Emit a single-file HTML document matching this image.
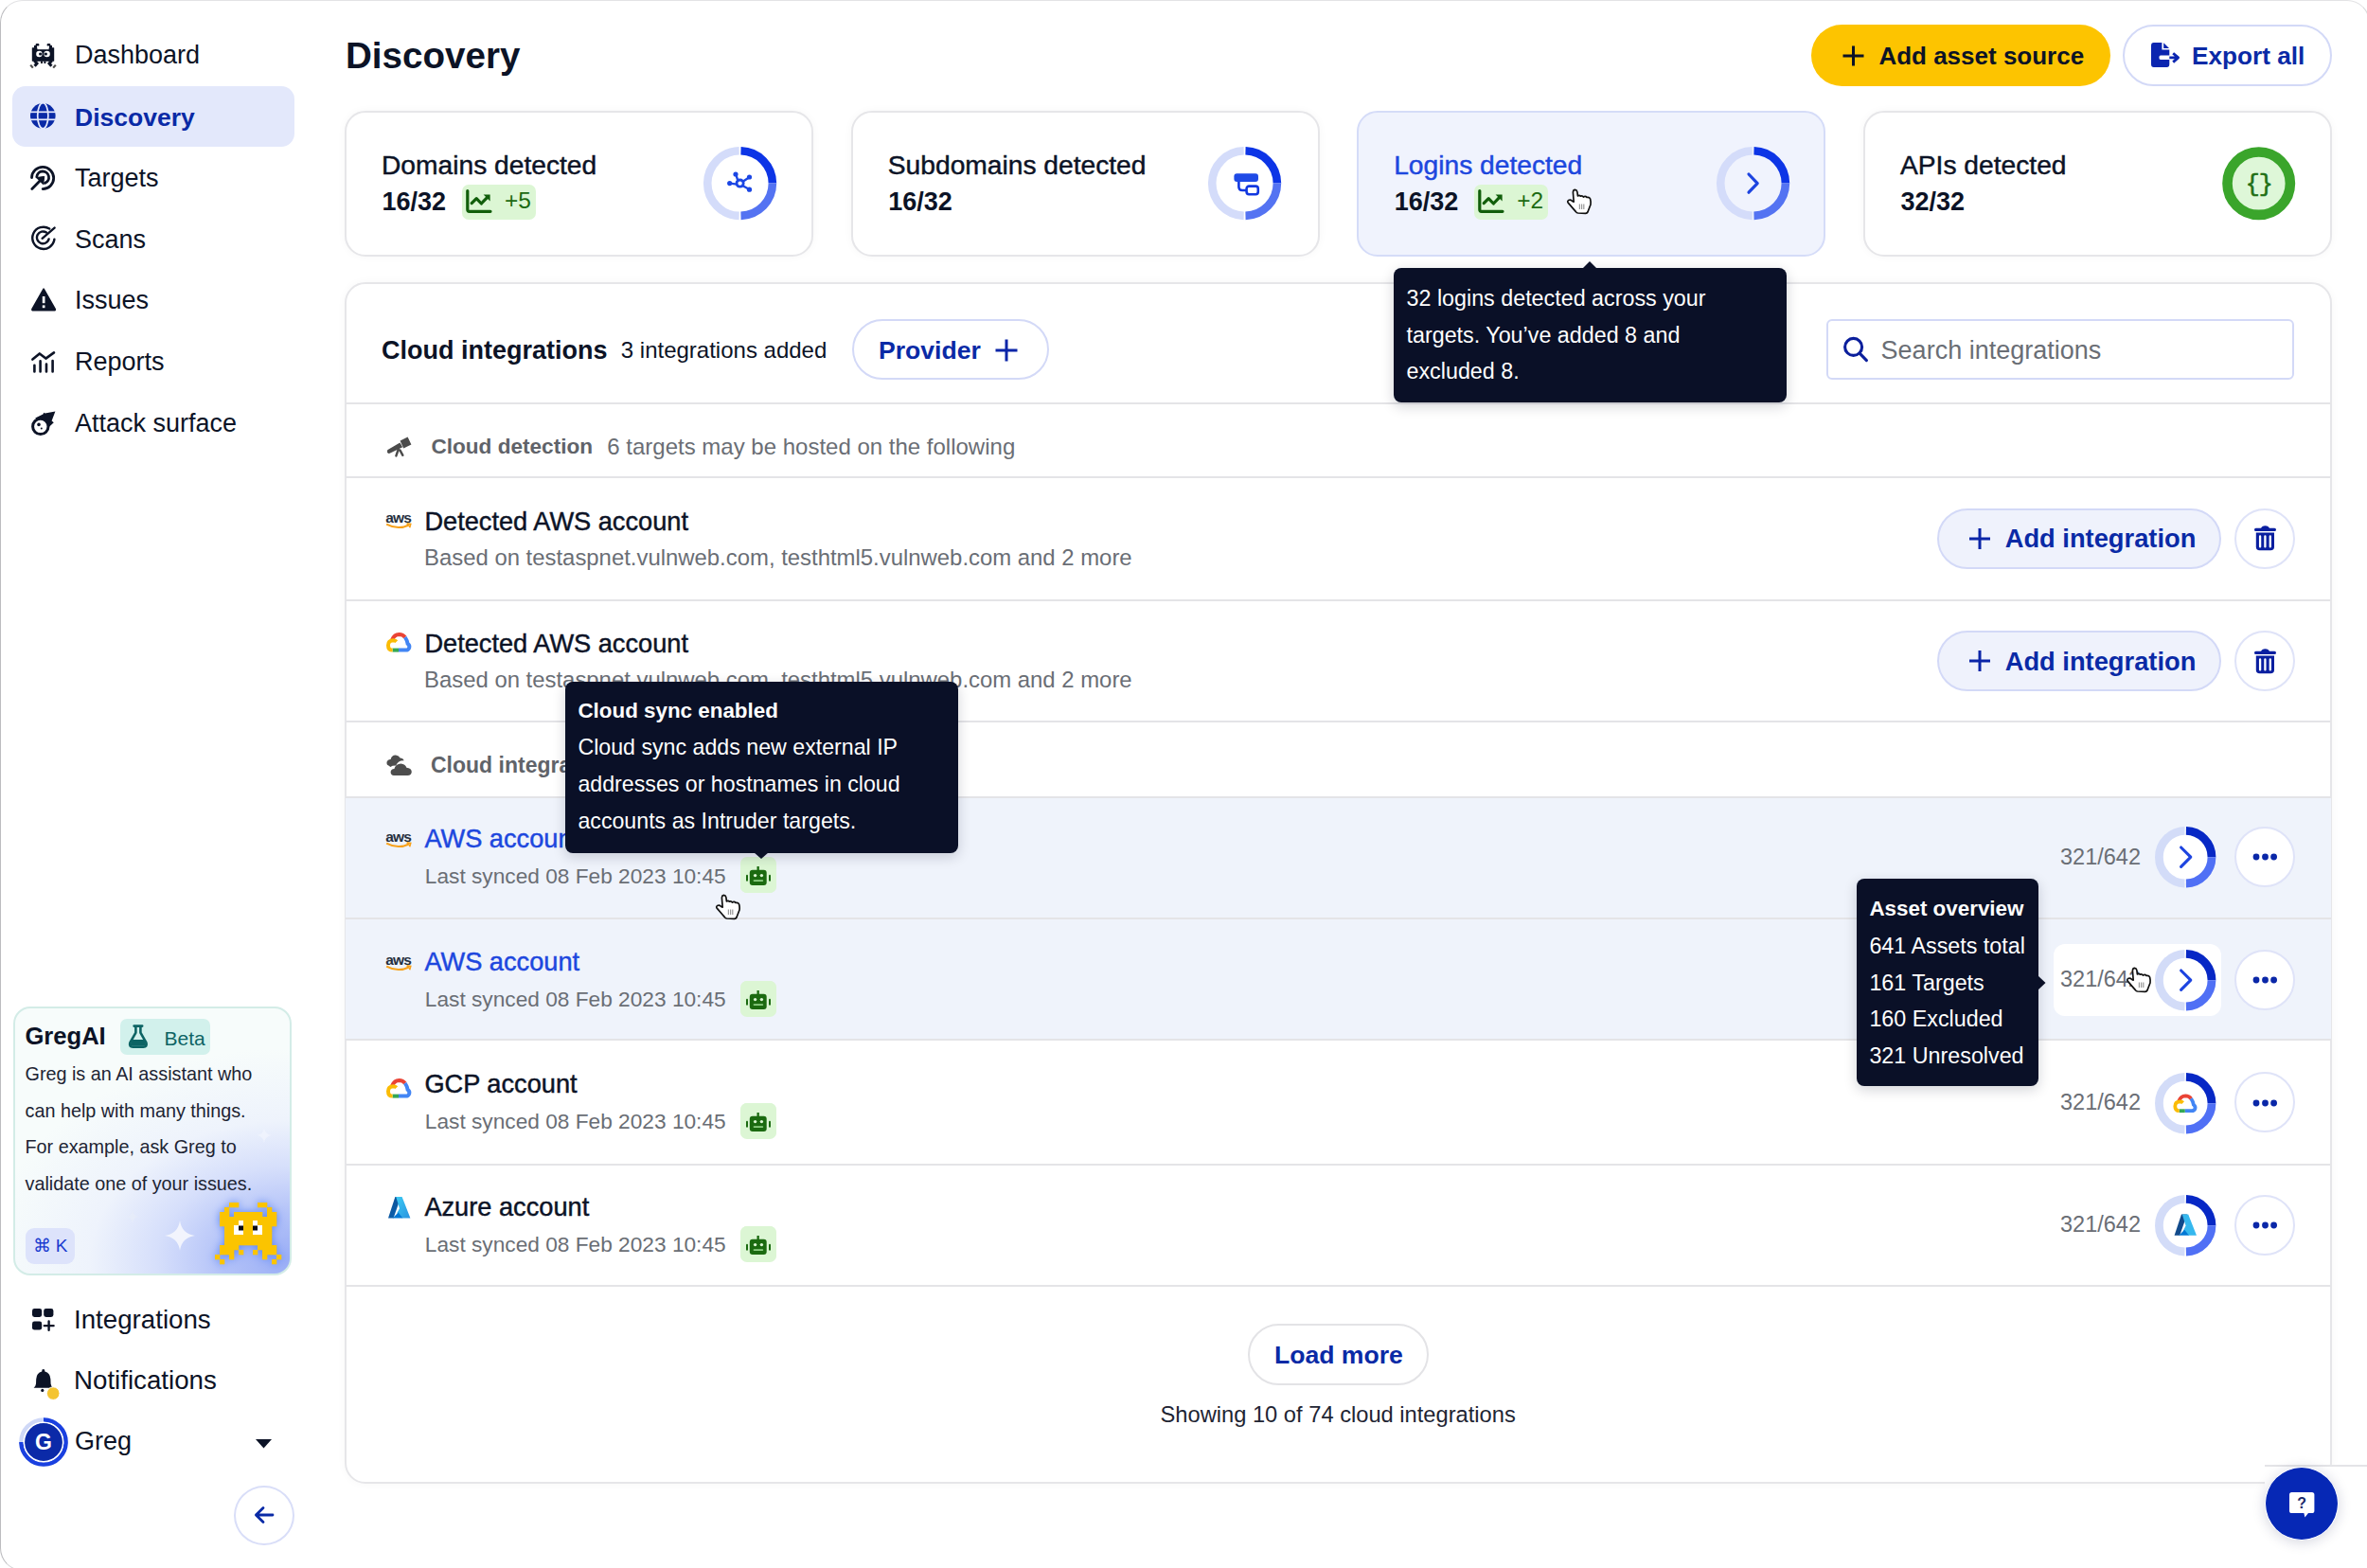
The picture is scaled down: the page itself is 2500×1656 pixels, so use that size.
<!DOCTYPE html>
<html><head><meta charset="utf-8"><title>Discovery</title>
<style>
html,body{margin:0;padding:0;background:#fff;}
body{width:2500px;height:1656px;position:relative;overflow:hidden;font-family:"Liberation Sans",sans-serif;}
.t{position:absolute;white-space:nowrap;line-height:1;}
.b{position:absolute;box-sizing:border-box;}
svg.b{overflow:visible;}
</style></head><body>

<div class="b" style="left:0.0px;top:0.0px;width:2503.0px;height:1659.0px;border:1.5px solid #d8d8da;border-left-color:#bcbcbf;border-top-color:#e3e3e5;border-radius:24px;"></div>
<div class="b" style="left:13.0px;top:91.0px;width:298.0px;height:64.0px;background:#e3e8fb;border-radius:14px;"></div>
<div class="t" style="left:79.0px;top:44.7px;font-size:27px;font-weight:400;color:#0c1326;">Dashboard</div>
<div class="t" style="left:79.0px;top:110.9px;font-size:26.5px;font-weight:700;color:#0a2aa6;">Discovery</div>
<div class="t" style="left:79.0px;top:174.8px;font-size:27px;font-weight:400;color:#0c1326;">Targets</div>
<div class="t" style="left:79.0px;top:239.5px;font-size:27px;font-weight:400;color:#0c1326;">Scans</div>
<div class="t" style="left:79.0px;top:304.1px;font-size:27px;font-weight:400;color:#0c1326;">Issues</div>
<div class="t" style="left:79.0px;top:368.7px;font-size:27px;font-weight:400;color:#0c1326;">Reports</div>
<div class="t" style="left:79.0px;top:433.7px;font-size:27px;font-weight:400;color:#0c1326;">Attack surface</div>
<div class="t" style="left:78.0px;top:1379.6px;font-size:27.7px;font-weight:400;color:#0c1326;">Integrations</div>
<div class="t" style="left:78.0px;top:1444.2px;font-size:27.7px;font-weight:400;color:#0c1326;">Notifications</div>
<div class="t" style="left:79.0px;top:1508.9px;font-size:27px;font-weight:400;color:#0c1326;">Greg</div>
<div class="t" style="left:365.0px;top:40.1px;font-size:38.6px;font-weight:700;color:#0c1326;">Discovery</div>
<div class="b" style="left:1913.0px;top:26.0px;width:316.0px;height:65.0px;background:#fdc400;border-radius:33px;"></div>
<div class="t" style="left:1984.4px;top:45.8px;font-size:26px;font-weight:700;color:#0c1326;">Add asset source</div>
<div class="b" style="left:2242.0px;top:26.0px;width:221.0px;height:65.0px;background:#fff;border:2px solid #d3d9f7;border-radius:33px;"></div>
<div class="t" style="left:2315.0px;top:45.6px;font-size:26.2px;font-weight:700;color:#0a2aa6;">Export all</div>
<div class="b" style="left:364.0px;top:116.5px;width:495.0px;height:154.5px;background:#fff;border:2px solid #e6e6e9;border-radius:22px;box-shadow:0 0 10px rgba(0,0,0,0.035);"></div>
<div class="t" style="left:403.0px;top:160.4px;font-size:28.2px;font-weight:400;color:#0c1326;-webkit-text-stroke:0.45px #0c1326;">Domains detected</div>
<div class="t" style="left:403.5px;top:200.1px;font-size:27px;font-weight:700;color:#0c1326;">16/32</div>
<div class="b" style="left:487.5px;top:195.0px;width:78.0px;height:37.0px;background:#dcf6d4;border-radius:7px;"></div>
<div class="t" style="left:533.0px;top:199.9px;font-size:24.5px;font-weight:400;color:#1c6a12;">+5</div>
<div class="b" style="left:898.8px;top:116.5px;width:495.0px;height:154.5px;background:#fff;border:2px solid #e6e6e9;border-radius:22px;box-shadow:0 0 10px rgba(0,0,0,0.035);"></div>
<div class="t" style="left:937.8px;top:160.4px;font-size:28.2px;font-weight:400;color:#0c1326;-webkit-text-stroke:0.45px #0c1326;">Subdomains detected</div>
<div class="t" style="left:938.3px;top:200.1px;font-size:27px;font-weight:700;color:#0c1326;">16/32</div>
<div class="b" style="left:1433.2px;top:116.5px;width:495.0px;height:154.5px;background:#f0f3fd;border:2px solid #d5dcf8;border-radius:22px;"></div>
<div class="t" style="left:1472.2px;top:160.4px;font-size:28.2px;font-weight:400;color:#1d47de;-webkit-text-stroke:0.45px #1d47de;">Logins detected</div>
<div class="t" style="left:1472.7px;top:200.1px;font-size:27px;font-weight:700;color:#0c1326;">16/32</div>
<div class="b" style="left:1556.7px;top:195.0px;width:78.0px;height:37.0px;background:#dcf6d4;border-radius:7px;"></div>
<div class="t" style="left:1602.2px;top:199.9px;font-size:24.5px;font-weight:400;color:#1c6a12;">+2</div>
<div class="b" style="left:1968.0px;top:116.5px;width:495.0px;height:154.5px;background:#fff;border:2px solid #e6e6e9;border-radius:22px;box-shadow:0 0 10px rgba(0,0,0,0.035);"></div>
<div class="t" style="left:2007.0px;top:160.4px;font-size:28.2px;font-weight:400;color:#0c1326;-webkit-text-stroke:0.45px #0c1326;">APIs detected</div>
<div class="t" style="left:2007.5px;top:200.1px;font-size:27px;font-weight:700;color:#0c1326;">32/32</div>
<div class="b" style="left:364.0px;top:298.0px;width:2099.0px;height:1269.0px;background:#fff;border:2px solid #e6e6e9;border-radius:22px;box-shadow:0 0 10px rgba(0,0,0,0.035);"></div>
<div class="t" style="left:403.0px;top:356.7px;font-size:27px;font-weight:700;color:#0c1326;">Cloud integrations</div>
<div class="t" style="left:655.8px;top:358.2px;font-size:24px;font-weight:400;color:#0c1326;">3 integrations added</div>
<div class="b" style="left:900.0px;top:337.0px;width:208.0px;height:64.0px;background:#fff;border:2px solid #d3d9f7;border-radius:32px;"></div>
<div class="t" style="left:928.0px;top:356.5px;font-size:26.6px;font-weight:700;color:#0a2aa6;">Provider</div>
<div class="b" style="left:1928.5px;top:337.0px;width:494.5px;height:64.0px;background:#fff;border:2px solid #d3d9f7;border-radius:6px;"></div>
<div class="t" style="left:1986.6px;top:357.1px;font-size:27px;font-weight:400;color:#6a6e75;">Search integrations</div>
<div class="b" style="left:365.0px;top:425.0px;width:2097.0px;height:2.0px;background:#e4e4e7;"></div>
<div class="b" style="left:365.0px;top:502.5px;width:2097.0px;height:2.0px;background:#e4e4e7;"></div>
<div class="b" style="left:365.0px;top:632.5px;width:2097.0px;height:2.0px;background:#e4e4e7;"></div>
<div class="b" style="left:365.0px;top:760.5px;width:2097.0px;height:2.0px;background:#e4e4e7;"></div>
<div class="t" style="left:455.4px;top:460.9px;font-size:22.6px;font-weight:700;color:#606369;">Cloud detection</div>
<div class="t" style="left:641.3px;top:459.7px;font-size:24px;font-weight:400;color:#6a6e75;">6 targets may be hosted on the following</div>
<div class="t" style="left:448.4px;top:536.7px;font-size:27.2px;font-weight:400;color:#0c1326;-webkit-text-stroke:0.45px #0c1326;">Detected AWS account</div>
<div class="t" style="left:448.0px;top:576.8px;font-size:23.9px;font-weight:400;color:#6a6e75;">Based on testaspnet.vulnweb.com, testhtml5.vulnweb.com and 2 more</div>
<div class="t" style="left:448.4px;top:666.0px;font-size:27.2px;font-weight:400;color:#0c1326;-webkit-text-stroke:0.45px #0c1326;">Detected AWS account</div>
<div class="t" style="left:448.0px;top:705.8px;font-size:23.9px;font-weight:400;color:#6a6e75;">Based on testaspnet.vulnweb.com, testhtml5.vulnweb.com and 2 more</div>
<div class="b" style="left:2046.0px;top:536.5px;width:300.0px;height:64.0px;background:#eff2fc;border:2px solid #d3d9f7;border-radius:32px;"></div>
<div class="t" style="left:2117.7px;top:555.1px;font-size:27.3px;font-weight:700;color:#0a2aa6;">Add integration</div>
<div class="b" style="left:2360.0px;top:536.5px;width:64.0px;height:64.0px;background:#fff;border:2px solid #dfe3f8;border-radius:50%;"></div>
<div class="b" style="left:2046.0px;top:666.2px;width:300.0px;height:64.0px;background:#eff2fc;border:2px solid #d3d9f7;border-radius:32px;"></div>
<div class="t" style="left:2117.7px;top:684.8px;font-size:27.3px;font-weight:700;color:#0a2aa6;">Add integration</div>
<div class="b" style="left:2360.0px;top:666.2px;width:64.0px;height:64.0px;background:#fff;border:2px solid #dfe3f8;border-radius:50%;"></div>
<div class="t" style="left:455.0px;top:797.2px;font-size:23px;font-weight:700;color:#606369;">Cloud integrations</div>
<div class="b" style="left:365.0px;top:842.0px;width:2097.0px;height:128.0px;background:#eff3fb;"></div>
<div class="b" style="left:365.0px;top:841.0px;width:2097.0px;height:2.0px;background:#e4e4e7;"></div>
<div class="b" style="left:365.0px;top:970.0px;width:2097.0px;height:128.0px;background:#eff3fb;"></div>
<div class="b" style="left:365.0px;top:969.0px;width:2097.0px;height:2.0px;background:#e4e4e7;"></div>
<div class="b" style="left:365.0px;top:1097.0px;width:2097.0px;height:2.0px;background:#e4e4e7;"></div>
<div class="b" style="left:365.0px;top:1229.0px;width:2097.0px;height:2.0px;background:#e4e4e7;"></div>
<div class="b" style="left:2169.0px;top:996.7px;width:177.4px;height:76.8px;background:#fff;border-radius:12px;"></div>
<div class="t" style="left:448.4px;top:872.4px;font-size:27.2px;font-weight:400;color:#1d47de;-webkit-text-stroke:0.45px #1d47de;">AWS account</div>
<div class="t" style="left:448.8px;top:914.1px;font-size:22.7px;font-weight:400;color:#6a6e75;">Last synced 08 Feb 2023 10:45</div>
<div class="b" style="left:782.0px;top:906.4px;width:38.0px;height:37.0px;background:#dcf6d4;border-radius:7px;"></div>
<div class="t" style="left:2176.0px;top:893.5px;font-size:23.5px;font-weight:400;color:#6a6e75;">321/642</div>
<div class="b" style="left:2360.0px;top:873.4px;width:64.0px;height:64.0px;background:#fff;border:2px solid #dfe3f8;border-radius:50%;"></div>
<div class="t" style="left:448.4px;top:1001.9px;font-size:27.2px;font-weight:400;color:#1d47de;-webkit-text-stroke:0.45px #1d47de;">AWS account</div>
<div class="t" style="left:448.8px;top:1043.6px;font-size:22.7px;font-weight:400;color:#6a6e75;">Last synced 08 Feb 2023 10:45</div>
<div class="b" style="left:782.0px;top:1035.9px;width:38.0px;height:37.0px;background:#dcf6d4;border-radius:7px;"></div>
<div class="t" style="left:2176.0px;top:1023.0px;font-size:23.5px;font-weight:400;color:#6a6e75;">321/642</div>
<div class="b" style="left:2360.0px;top:1002.9px;width:64.0px;height:64.0px;background:#fff;border:2px solid #dfe3f8;border-radius:50%;"></div>
<div class="t" style="left:448.4px;top:1131.4px;font-size:27.2px;font-weight:400;color:#0c1326;-webkit-text-stroke:0.45px #0c1326;">GCP account</div>
<div class="t" style="left:448.8px;top:1173.1px;font-size:22.7px;font-weight:400;color:#6a6e75;">Last synced 08 Feb 2023 10:45</div>
<div class="b" style="left:782.0px;top:1165.4px;width:38.0px;height:37.0px;background:#dcf6d4;border-radius:7px;"></div>
<div class="t" style="left:2176.0px;top:1152.5px;font-size:23.5px;font-weight:400;color:#6a6e75;">321/642</div>
<div class="b" style="left:2360.0px;top:1132.4px;width:64.0px;height:64.0px;background:#fff;border:2px solid #dfe3f8;border-radius:50%;"></div>
<div class="t" style="left:448.4px;top:1260.9px;font-size:27.2px;font-weight:400;color:#0c1326;-webkit-text-stroke:0.45px #0c1326;">Azure account</div>
<div class="t" style="left:448.8px;top:1302.6px;font-size:22.7px;font-weight:400;color:#6a6e75;">Last synced 08 Feb 2023 10:45</div>
<div class="b" style="left:782.0px;top:1294.9px;width:38.0px;height:37.0px;background:#dcf6d4;border-radius:7px;"></div>
<div class="t" style="left:2176.0px;top:1282.0px;font-size:23.5px;font-weight:400;color:#6a6e75;">321/642</div>
<div class="b" style="left:2360.0px;top:1261.9px;width:64.0px;height:64.0px;background:#fff;border:2px solid #dfe3f8;border-radius:50%;"></div>
<div class="b" style="left:365.0px;top:1357.0px;width:2097.0px;height:2.0px;background:#e4e4e7;"></div>
<div class="b" style="left:1318.4px;top:1398.3px;width:190.6px;height:64.4px;background:#fff;border:2px solid #e3e3e6;border-radius:33px;"></div>
<div class="t" style="left:1345.9px;top:1417.6px;font-size:26.6px;font-weight:700;color:#0a2aa6;">Load more</div>
<div class="t" style="left:1225.5px;top:1483.2px;font-size:23.7px;font-weight:400;color:#1f2533;">Showing 10 of 74 cloud integrations</div>
<svg class="b" style="left:31.0px;top:45.5px;" width="29" height="27" viewBox="0 0 29 27"><g fill="#0c1326">
<rect x="6.6" y="0" width="3.8" height="2.6" rx="1.2"/><rect x="18.6" y="0" width="3.8" height="2.6" rx="1.2"/>
<rect x="5" y="2" width="3" height="3.6"/><rect x="21" y="2" width="3" height="3.6"/>
<rect x="2.8" y="4.2" width="5.6" height="14.6" rx="0.6"/><rect x="20.6" y="4.2" width="5.6" height="14.6" rx="0.6"/>
<rect x="8" y="6.2" width="13" height="12.6"/>
<rect x="12" y="18.6" width="2" height="2.4"/><rect x="15.4" y="18.6" width="2" height="2.4"/>
</g>
<circle cx="10.4" cy="11" r="3.2" fill="#fff"/><circle cx="18.6" cy="11" r="3.2" fill="#fff"/>
<circle cx="11.6" cy="11" r="1.6" fill="#0c1326"/><circle cx="17.4" cy="11" r="1.6" fill="#0c1326"/>
<path d="M5.2 18 L8 21 L5.6 23.8" stroke="#0c1326" stroke-width="3" fill="none"/>
<path d="M23.8 18 L21 21 L23.4 23.8" stroke="#0c1326" stroke-width="3" fill="none"/>
<path d="M1.2 22.6 L3.8 25.6" stroke="#4a4a4a" stroke-width="2.2"/><path d="M27.8 22.6 L25.2 25.6" stroke="#4a4a4a" stroke-width="2.2"/></svg>
<svg class="b" style="left:32.4px;top:109.2px;" width="26.6" height="26.6" viewBox="0 0 26.6 26.6"><circle cx="13.3" cy="13.3" r="13.3" fill="#0a2aa6"/>
<g stroke="#e3e8fb" stroke-width="1.7" fill="none"><line x1="0" y1="9.3" x2="26.6" y2="9.3"/><line x1="0" y1="17.3" x2="26.6" y2="17.3"/>
<ellipse cx="13.3" cy="13.3" rx="5.6" ry="13.6"/></g></svg>
<svg class="b" style="left:32.4px;top:174.7px;" width="26.4" height="26.4" viewBox="0 0 26.4 26.4"><g fill="none" stroke="#0c1326" stroke-width="2.8" stroke-linecap="round">
<path d="M1.5 12.6 A11.6 11.6 0 1 1 13.2 24.6"/>
<path d="M6.8 11.8 A6.4 6.4 0 1 1 15.4 18.4"/>
<path d="M1.8 24.4 L10.6 15.6"/></g>
<path d="M6.4 12.6 L14.8 11.4 L13.6 19.8z" fill="#0c1326" stroke="#0c1326" stroke-width="1" stroke-linejoin="round"/></svg>
<svg class="b" style="left:33.0px;top:239.2px;" width="26" height="26" viewBox="0 0 26 26"><g fill="none" stroke="#0c1326" stroke-width="2.4" stroke-linecap="round">
<path d="M19.2 2.6 A11.6 11.6 0 1 0 24.4 13.6"/>
<path d="M16 6.6 A6.4 6.4 0 1 0 18.6 13.4"/>
<path d="M11.6 12.8 L24.6 1.6"/></g></svg>
<svg class="b" style="left:32.6px;top:303.8px;" width="26.2" height="24.6" viewBox="0 0 26.2 24.6"><path d="M13.1 1.2 L25.2 22.4 Q25.6 23.8 24.2 23.8 L2 23.8 Q0.6 23.8 1 22.4z" fill="#0c1326" stroke="#0c1326" stroke-width="1.6" stroke-linejoin="round"/>
<rect x="11.8" y="9" width="2.7" height="7.2" fill="#fff"/><rect x="11.8" y="18.4" width="2.7" height="2.8" fill="#fff"/></svg>
<svg class="b" style="left:32.7px;top:370.5px;" width="26.3" height="23" viewBox="0 0 26.3 23"><g fill="none" stroke="#0c1326" stroke-width="2.6" stroke-linecap="round" stroke-linejoin="round">
<path d="M1.4 8.6 L8.8 2.4 L15.4 7.6 L24 1.4"/>
<path d="M3.4 14.8 V21.4 M9.6 10.4 V21.4 M16 13.6 V21.4 M22.6 10 V21.4"/></g></svg>
<svg class="b" style="left:32.7px;top:433.7px;" width="26" height="26" viewBox="0 0 26 26"><path d="M4.2 7.6 L12.4 3.4 L13.4 1.8 L14.6 2.6 L25.4 0.6 L21.6 10.4 L23.8 12.2 L17.6 18 Z" fill="#0c1326"/>
<circle cx="9.8" cy="16.4" r="8.2" fill="#fff" stroke="#0c1326" stroke-width="3"/>
<circle cx="8" cy="14.4" r="1.8" fill="#0c1326"/><circle cx="10.8" cy="18.4" r="1" fill="#0c1326"/></svg>
<svg class="b" style="left:34.0px;top:1382.3px;" width="24" height="23" viewBox="0 0 24 23"><g fill="#0c1326"><rect x="0" y="0" width="10.2" height="9" rx="2.4"/><rect x="12.2" y="0" width="10.2" height="9" rx="2.4"/>
<rect x="0" y="13.6" width="10.2" height="9" rx="2.4"/></g>
<path d="M17.6 13.4 V22.8 M12.8 18.1 H22.6" stroke="#0c1326" stroke-width="2.4" stroke-linecap="round"/></svg>
<svg class="b" style="left:33.5px;top:1444.5px;" width="30" height="34" viewBox="0 0 30 34"><path d="M10.5 1.6 Q11.8 0.4 13.1 1.6 L13.4 3.6 Q19 5 19.4 11.5 L19.6 16.5 Q20 19.5 22 20.8 L1.6 20.8 Q3.6 19.5 4 16.5 L4.2 11.5 Q4.6 5 10.2 3.6z" fill="#0c1326"/>
<circle cx="10.8" cy="23.4" r="1.6" fill="#0c1326"/>
<circle cx="22.2" cy="26.6" r="6.8" fill="#f4c430" stroke="#fff" stroke-width="1"/></svg>
<svg class="b" style="left:19.8px;top:1497.0px;" width="52" height="52" viewBox="0 0 52 52"><circle cx="26" cy="26" r="23.6" fill="none" stroke="#cfd8f7" stroke-width="4.4"/>
<path d="M26 2.4 A23.6 23.6 0 1 1 2.4 26" fill="none" stroke="#1a40e0" stroke-width="4.4"/>
<circle cx="26" cy="26" r="20.6" fill="#0b2aa8" stroke="#fff" stroke-width="1.4"/>
<text x="26" y="34.2" text-anchor="middle" font-family="Liberation Sans" font-size="23" font-weight="700" fill="#fff">G</text></svg>
<svg class="b" style="left:270.3px;top:1520.0px;" width="17" height="9.5" viewBox="0 0 17 9.5"><path d="M0 0 H17 L8.5 9.5z" fill="#0c1326"/></svg>
<div class="b" style="left:246.7px;top:1568.6px;width:64.3px;height:63.8px;background:#fff;border:2px solid #d9def8;border-radius:50%;"></div>
<svg class="b" style="left:268.0px;top:1590.0px;" width="22" height="20" viewBox="0 0 22 20"><path d="M20 10 H2.5 M10 2.4 L2.4 10 L10 17.6" fill="none" stroke="#0a2aa6" stroke-width="2.8" stroke-linecap="round" stroke-linejoin="round"/></svg>
<svg class="b" style="left:1945.0px;top:48.0px;" width="26" height="22" viewBox="0 0 26 22"><path d="M12.5 0.5 V21.5 M1.5 11 H23.5" stroke="#0c1326" stroke-width="3" /></svg>
<svg class="b" style="left:2272.3px;top:44.9px;" width="30" height="26.5" viewBox="0 0 30 26.5"><path d="M2.8 0 H11.4 V7.6 H19.3 V13.6 H10 Q8.4 13.6 8.4 15.8 Q8.4 18 10 18 H19.3 V22.8 Q19.3 26 16.5 26 H2.8 Q0 26 0 22.8 V3.2 Q0 0 2.8 0z" fill="#0b25b0"/>
<path d="M13.2 0.2 L19 6 H13.2z" fill="#0b25b0"/>
<path d="M19.3 15.9 H28.4 M23.2 11.2 L28.6 15.9 L23.2 20.6" fill="none" stroke="#0b25b0" stroke-width="2.8" stroke-linejoin="round"/></svg>
<svg class="b" style="left:491.5px;top:200.4px;" width="28" height="25" viewBox="0 0 28 25"><g fill="none" stroke="#115e0b" stroke-width="3.2" stroke-linecap="round" stroke-linejoin="round">
<path d="M1.8 1.6 V21.2 Q1.8 23.3 3.8 23.3 H26"/>
<path d="M6.2 14.6 L11.2 9.6 L16.4 15 L23 8.2"/></g>
<path d="M18.6 5.6 H25.6 V12.6z" fill="#115e0b"/></svg>
<svg class="b" style="left:1561.2px;top:200.4px;" width="28" height="25" viewBox="0 0 28 25"><g fill="none" stroke="#115e0b" stroke-width="3.2" stroke-linecap="round" stroke-linejoin="round">
<path d="M1.8 1.6 V21.2 Q1.8 23.3 3.8 23.3 H26"/>
<path d="M6.2 14.6 L11.2 9.6 L16.4 15 L23 8.2"/></g>
<path d="M18.6 5.6 H25.6 V12.6z" fill="#115e0b"/></svg>
<svg class="b" style="left:741.1px;top:153.2px;" width="81.2" height="81.2" viewBox="0 0 81.2 81.2"><circle cx="40.6" cy="40.6" r="34.300000000000004" fill="none"/><path d="M39.70 74.89 A34.300000000000004 34.300000000000004 0 0 1 39.70 6.31" fill="none" stroke="#d4dcfa" stroke-width="8.6"/><path d="M41.50 6.31 A34.300000000000004 34.300000000000004 0 0 1 74.90 40.60" fill="none" stroke="#0d35e6" stroke-width="8.6"/><path d="M74.90 40.60 A34.300000000000004 34.300000000000004 0 0 1 41.50 74.89" fill="none" stroke="#5473f2" stroke-width="8.6"/><g transform="translate(40.6,40.6)" fill="#1b46e4" stroke="#1b46e4">
<circle cx="0" cy="0" r="3.6" fill="none" stroke-width="2.8"/>
<path d="M-2.2 -2.6 L-4.4 -9.4 M2.6 -1.6 L9.8 -6.4 M2.6 2.4 L9.8 6.4 M-3.2 1 L-10.6 0" stroke-width="2.4" fill="none"/>
<circle cx="-4.6" cy="-9.6" r="2.6" stroke="none"/><circle cx="9.9" cy="-6.6" r="2.6" stroke="none"/>
<circle cx="9.9" cy="6.6" r="2.6" stroke="none"/><circle cx="-10.9" cy="0" r="2.6" stroke="none"/>
</g></svg>
<svg class="b" style="left:1274.2px;top:153.0px;" width="81.2" height="81.2" viewBox="0 0 81.2 81.2"><circle cx="40.6" cy="40.6" r="34.300000000000004" fill="none"/><path d="M39.70 74.89 A34.300000000000004 34.300000000000004 0 0 1 39.70 6.31" fill="none" stroke="#d4dcfa" stroke-width="8.6"/><path d="M41.50 6.31 A34.300000000000004 34.300000000000004 0 0 1 74.90 40.60" fill="none" stroke="#0d35e6" stroke-width="8.6"/><path d="M74.90 40.60 A34.300000000000004 34.300000000000004 0 0 1 41.50 74.89" fill="none" stroke="#5473f2" stroke-width="8.6"/><g transform="translate(40.6,40.6)">
<rect x="-11.2" y="-10.4" width="25.6" height="8.8" rx="3" fill="#1f4ae6"/>
<path d="M-6.2 -1.6 V3.6 Q-6.2 7.4 -2.4 7.4 H2" fill="none" stroke="#1238e0" stroke-width="2.6"/>
<rect x="2" y="3" width="12.2" height="8.6" rx="2.6" fill="none" stroke="#1238e0" stroke-width="2.6"/>
</g></svg>
<svg class="b" style="left:1810.6px;top:152.9px;" width="81.2" height="81.2" viewBox="0 0 81.2 81.2"><circle cx="40.6" cy="40.6" r="34.300000000000004" fill="none"/><path d="M39.70 74.89 A34.300000000000004 34.300000000000004 0 0 1 39.70 6.31" fill="none" stroke="#d4dcfa" stroke-width="8.6"/><path d="M41.50 6.31 A34.300000000000004 34.300000000000004 0 0 1 74.90 40.60" fill="none" stroke="#0d35e6" stroke-width="8.6"/><path d="M74.90 40.60 A34.300000000000004 34.300000000000004 0 0 1 41.50 74.89" fill="none" stroke="#5473f2" stroke-width="8.6"/><path d="M36 31 L45.2 40.6 L36 50.2" transform="translate(0,0)" fill="none" stroke="#1d44e0" stroke-width="3.2" stroke-linecap="round" stroke-linejoin="round"/></svg>
<svg class="b" style="left:2344.7px;top:153.1px;" width="81.4" height="81.4" viewBox="0 0 81.4 81.4"><circle cx="40.7" cy="40.7" r="33.2" fill="#def7d8" stroke="#3aa52b" stroke-width="10.6"/>
<text x="40.7" y="49" text-anchor="middle" font-family="Liberation Mono" font-size="25" font-weight="400" letter-spacing="-1" fill="#1f6f15" stroke="#1f6f15" stroke-width="0.6">{}</text></svg>
<svg class="b" style="left:1050.0px;top:357.0px;" width="26" height="26" viewBox="0 0 26 26"><path d="M13 1.5 V24.5 M1.5 13 H24.5" stroke="#0b25a8" stroke-width="3"/></svg>
<svg class="b" style="left:1945.0px;top:354.0px;" width="30" height="30" viewBox="0 0 30 30"><circle cx="12.6" cy="12.4" r="9" fill="none" stroke="#0b1f9c" stroke-width="3.1"/><path d="M19.4 19.4 L26.4 26.6" stroke="#0b1f9c" stroke-width="3.1" stroke-linecap="round"/></svg>
<svg class="b" style="left:408.0px;top:456.0px;" width="30" height="30" viewBox="0 0 30 30"><g fill="#4b4b4b">
<path d="M1.2 19.2 L14.4 11.6 L17.2 16.2 L3.6 22.8 Q1.6 23.4 1 21.6z"/>
<path d="M14.6 9.4 L22.6 5.4 L26.4 13.6 L18.2 17.4z"/>
</g>
<path d="M12.6 19 L10.4 25.4 M14.4 19.4 L17.4 24.8" stroke="#4b4b4b" stroke-width="2.4" stroke-linecap="round"/></svg>
<svg class="b" style="left:406.0px;top:539.0px;" width="30" height="20" viewBox="0 0 30 20"><text x="14.6" y="13.2" text-anchor="middle" font-family="Liberation Sans" font-size="15.5" font-weight="700" letter-spacing="-0.9" fill="#252f3e">aws</text>
<path d="M2.2 14.6 Q14 21 26 15.4" fill="none" stroke="#f7a11a" stroke-width="2.2"/>
<path d="M23.6 14 L27.6 14.6 L26.6 18.2" fill="none" stroke="#f7a11a" stroke-width="1.8"/></svg>
<svg class="b" style="left:408.2px;top:667.4px;" width="27" height="22" viewBox="0 0 27 22"><g fill="none" stroke-width="4">
<path d="M6.2 8.6 Q8.4 3.2 13.6 3 Q17.6 3 19.8 6" stroke="#ea4335"/>
<path d="M19.8 6 Q22.2 9.6 22.6 12.8 Q25 14.4 24.2 17.2 Q23.2 19.6 20.6 19.6 H13" stroke="#4285f4"/>
<path d="M13 19.6 H6.6" stroke="#34a853"/>
<path d="M6.6 19.6 Q2 19.6 2 14.4 Q2 9.4 7.6 9.2 Q9.6 9.4 10.8 10.6" stroke="#fbbc05"/>
</g></svg>
<svg class="b" style="left:408.0px;top:796.0px;" width="28" height="24" viewBox="0 0 28 24"><g fill="#4d4d4d">
<path d="M2.4 12.6 Q0 12 0.6 8.6 Q1.6 5.6 4.6 6 Q5.6 1.2 10 1.4 Q13.4 1.8 14.6 4.6 Q17.6 4.4 18.8 7.2 Q12.6 6.8 10.2 12.6 Q6 12.6 4.4 14z"/>
<path d="M8 23 Q4.8 22.8 4.6 19.4 Q4.8 16.2 8.4 16 Q9.8 10.6 15.4 10.4 Q20 10.8 21.4 14.8 Q26.4 15.2 26.8 19 Q26.6 22.8 22.4 23z"/>
</g></svg>
<svg class="b" style="left:406.0px;top:876.4px;" width="30" height="20" viewBox="0 0 30 20"><text x="14.6" y="13.2" text-anchor="middle" font-family="Liberation Sans" font-size="15.5" font-weight="700" letter-spacing="-0.9" fill="#252f3e">aws</text>
<path d="M2.2 14.6 Q14 21 26 15.4" fill="none" stroke="#f7a11a" stroke-width="2.2"/>
<path d="M23.6 14 L27.6 14.6 L26.6 18.2" fill="none" stroke="#f7a11a" stroke-width="1.8"/></svg>
<svg class="b" style="left:406.0px;top:1006.0px;" width="30" height="20" viewBox="0 0 30 20"><text x="14.6" y="13.2" text-anchor="middle" font-family="Liberation Sans" font-size="15.5" font-weight="700" letter-spacing="-0.9" fill="#252f3e">aws</text>
<path d="M2.2 14.6 Q14 21 26 15.4" fill="none" stroke="#f7a11a" stroke-width="2.2"/>
<path d="M23.6 14 L27.6 14.6 L26.6 18.2" fill="none" stroke="#f7a11a" stroke-width="1.8"/></svg>
<svg class="b" style="left:408.2px;top:1138.0px;" width="27" height="22" viewBox="0 0 27 22"><g fill="none" stroke-width="4">
<path d="M6.2 8.6 Q8.4 3.2 13.6 3 Q17.6 3 19.8 6" stroke="#ea4335"/>
<path d="M19.8 6 Q22.2 9.6 22.6 12.8 Q25 14.4 24.2 17.2 Q23.2 19.6 20.6 19.6 H13" stroke="#4285f4"/>
<path d="M13 19.6 H6.6" stroke="#34a853"/>
<path d="M6.6 19.6 Q2 19.6 2 14.4 Q2 9.4 7.6 9.2 Q9.6 9.4 10.8 10.6" stroke="#fbbc05"/>
</g></svg>
<svg class="b" style="left:410.0px;top:1263.8px;" width="24" height="23" viewBox="0 0 24 23"><defs><linearGradient id="azg" x1="0" y1="0" x2="1" y2="1"><stop offset="0" stop-color="#114a8b"/><stop offset="1" stop-color="#0669bc"/></linearGradient>
<linearGradient id="azg2" x1="0" y1="0" x2="1" y2="1"><stop offset="0" stop-color="#3ccbf4"/><stop offset="1" stop-color="#2892df"/></linearGradient></defs>
<path d="M7.4 0 H13.4 L5.6 22.4 H0z" fill="url(#azg)"/>
<path d="M8.2 0 H14.6 L23.4 22.4 H14.8 L9.4 17 L12 12.2z" fill="url(#azg2)"/>
<path d="M10.6 16.4 L15.4 22.4 H4.8z" fill="#0078d4"/></svg>
<div class="b" style="left:782.0px;top:905.4px;width:38.3px;height:37.9px;background:#dcf6d4;border-radius:7px;"></div>
<svg class="b" style="left:787.6px;top:915.2px;" width="27" height="21" viewBox="0 0 27 21"><g fill="#1b6a10">
<rect x="3.8" y="3.8" width="17.9" height="16.3" rx="3"/>
<rect x="11.5" y="0" width="2.3" height="4"/>
<rect x="0" y="8.8" width="2" height="7" rx="1"/><rect x="24" y="8.8" width="2" height="7" rx="1"/>
</g>
<circle cx="9.6" cy="9.6" r="1.7" fill="#dcf6d4"/><circle cx="16.4" cy="9.6" r="1.7" fill="#dcf6d4"/>
<rect x="7.6" y="14.2" width="10.6" height="1.8" rx="0.9" fill="#8fcf84"/></svg>
<div class="b" style="left:782.0px;top:1035.9px;width:38.3px;height:37.9px;background:#dcf6d4;border-radius:7px;"></div>
<svg class="b" style="left:787.6px;top:1045.7px;" width="27" height="21" viewBox="0 0 27 21"><g fill="#1b6a10">
<rect x="3.8" y="3.8" width="17.9" height="16.3" rx="3"/>
<rect x="11.5" y="0" width="2.3" height="4"/>
<rect x="0" y="8.8" width="2" height="7" rx="1"/><rect x="24" y="8.8" width="2" height="7" rx="1"/>
</g>
<circle cx="9.6" cy="9.6" r="1.7" fill="#dcf6d4"/><circle cx="16.4" cy="9.6" r="1.7" fill="#dcf6d4"/>
<rect x="7.6" y="14.2" width="10.6" height="1.8" rx="0.9" fill="#8fcf84"/></svg>
<div class="b" style="left:782.0px;top:1165.4px;width:38.3px;height:37.9px;background:#dcf6d4;border-radius:7px;"></div>
<svg class="b" style="left:787.6px;top:1175.2px;" width="27" height="21" viewBox="0 0 27 21"><g fill="#1b6a10">
<rect x="3.8" y="3.8" width="17.9" height="16.3" rx="3"/>
<rect x="11.5" y="0" width="2.3" height="4"/>
<rect x="0" y="8.8" width="2" height="7" rx="1"/><rect x="24" y="8.8" width="2" height="7" rx="1"/>
</g>
<circle cx="9.6" cy="9.6" r="1.7" fill="#dcf6d4"/><circle cx="16.4" cy="9.6" r="1.7" fill="#dcf6d4"/>
<rect x="7.6" y="14.2" width="10.6" height="1.8" rx="0.9" fill="#8fcf84"/></svg>
<div class="b" style="left:782.0px;top:1294.9px;width:38.3px;height:37.9px;background:#dcf6d4;border-radius:7px;"></div>
<svg class="b" style="left:787.6px;top:1304.7px;" width="27" height="21" viewBox="0 0 27 21"><g fill="#1b6a10">
<rect x="3.8" y="3.8" width="17.9" height="16.3" rx="3"/>
<rect x="11.5" y="0" width="2.3" height="4"/>
<rect x="0" y="8.8" width="2" height="7" rx="1"/><rect x="24" y="8.8" width="2" height="7" rx="1"/>
</g>
<circle cx="9.6" cy="9.6" r="1.7" fill="#dcf6d4"/><circle cx="16.4" cy="9.6" r="1.7" fill="#dcf6d4"/>
<rect x="7.6" y="14.2" width="10.6" height="1.8" rx="0.9" fill="#8fcf84"/></svg>
<svg class="b" style="left:2079.0px;top:556.5px;" width="24" height="24" viewBox="0 0 24 24"><path d="M12 1 V23 M1 12 H23" stroke="#0b25a8" stroke-width="3"/></svg>
<svg class="b" style="left:2380.8px;top:553.9px;" width="23" height="28" viewBox="0 0 23 28"><path d="M1.6 5.4 H21.4" stroke="#0a1fa0" stroke-width="3.2" stroke-linecap="round"/>
<path d="M6.8 4.4 Q8 1.2 11.5 1.2 Q15 1.2 16.2 4.4z" fill="#0a1fa0"/>
<path d="M1.8 8.6 H21 V23.4 Q21 27.2 17.2 27.2 H5.6 Q1.8 27.2 1.8 23.4z" fill="#0a1fa0"/>
<g stroke="#fff" stroke-width="2.3" stroke-linecap="round"><path d="M6.1 12.4 V23.4 M11.4 12.4 V23.4 M16.8 12.4 V23.4"/></g></svg>
<svg class="b" style="left:2079.0px;top:686.2px;" width="24" height="24" viewBox="0 0 24 24"><path d="M12 1 V23 M1 12 H23" stroke="#0b25a8" stroke-width="3"/></svg>
<svg class="b" style="left:2380.8px;top:683.6px;" width="23" height="28" viewBox="0 0 23 28"><path d="M1.6 5.4 H21.4" stroke="#0a1fa0" stroke-width="3.2" stroke-linecap="round"/>
<path d="M6.8 4.4 Q8 1.2 11.5 1.2 Q15 1.2 16.2 4.4z" fill="#0a1fa0"/>
<path d="M1.8 8.6 H21 V23.4 Q21 27.2 17.2 27.2 H5.6 Q1.8 27.2 1.8 23.4z" fill="#0a1fa0"/>
<g stroke="#fff" stroke-width="2.3" stroke-linecap="round"><path d="M6.1 12.4 V23.4 M11.4 12.4 V23.4 M16.8 12.4 V23.4"/></g></svg>
<svg class="b" style="left:2274.0px;top:871.2px;" width="68.4" height="68.4" viewBox="0 0 68.4 68.4"><circle cx="34.2" cy="34.2" r="27.800000000000004" fill="#fff"/><path d="M33.47 61.99 A27.800000000000004 27.800000000000004 0 0 1 33.47 6.41" fill="none" stroke="#d3dcf8" stroke-width="8.8"/><path d="M34.93 6.41 A27.800000000000004 27.800000000000004 0 0 1 62.00 34.20" fill="none" stroke="#0728c5" stroke-width="8.8"/><path d="M62.00 34.20 A27.800000000000004 27.800000000000004 0 0 1 34.93 61.99" fill="none" stroke="#5070f5" stroke-width="8.8"/><path d="M29.6 24 L39.8 34.2 L29.6 44.4" fill="none" stroke="#1d44e0" stroke-width="3.1" stroke-linecap="round" stroke-linejoin="round"/></svg>
<svg class="b" style="left:2378.9px;top:901.4px;" width="30" height="8" viewBox="0 0 30 8"><circle cx="4" cy="4" r="3.4" fill="#0a27a8"/><circle cx="13.5" cy="4" r="3.4" fill="#0a27a8"/><circle cx="22.6" cy="4" r="3.4" fill="#0a27a8"/></svg>
<svg class="b" style="left:2274.0px;top:1001.0px;" width="68.4" height="68.4" viewBox="0 0 68.4 68.4"><circle cx="34.2" cy="34.2" r="27.800000000000004" fill="#fff"/><path d="M33.47 61.99 A27.800000000000004 27.800000000000004 0 0 1 33.47 6.41" fill="none" stroke="#d3dcf8" stroke-width="8.8"/><path d="M34.93 6.41 A27.800000000000004 27.800000000000004 0 0 1 62.00 34.20" fill="none" stroke="#0728c5" stroke-width="8.8"/><path d="M62.00 34.20 A27.800000000000004 27.800000000000004 0 0 1 34.93 61.99" fill="none" stroke="#5070f5" stroke-width="8.8"/><path d="M29.6 24 L39.8 34.2 L29.6 44.4" fill="none" stroke="#1d44e0" stroke-width="3.1" stroke-linecap="round" stroke-linejoin="round"/></svg>
<svg class="b" style="left:2378.9px;top:1031.2px;" width="30" height="8" viewBox="0 0 30 8"><circle cx="4" cy="4" r="3.4" fill="#0a27a8"/><circle cx="13.5" cy="4" r="3.4" fill="#0a27a8"/><circle cx="22.6" cy="4" r="3.4" fill="#0a27a8"/></svg>
<svg class="b" style="left:2274.0px;top:1130.6px;" width="68.4" height="68.4" viewBox="0 0 68.4 68.4"><circle cx="34.2" cy="34.2" r="27.800000000000004" fill="#fff"/><path d="M33.47 61.99 A27.800000000000004 27.800000000000004 0 0 1 33.47 6.41" fill="none" stroke="#d3dcf8" stroke-width="8.8"/><path d="M34.93 6.41 A27.800000000000004 27.800000000000004 0 0 1 62.00 34.20" fill="none" stroke="#0728c5" stroke-width="8.8"/><path d="M62.00 34.20 A27.800000000000004 27.800000000000004 0 0 1 34.93 61.99" fill="none" stroke="#5070f5" stroke-width="8.8"/><g transform="translate(21.4,23.6) scale(0.95)"><g fill="none" stroke-width="4">
<path d="M6.2 8.6 Q8.4 3.2 13.6 3 Q17.6 3 19.8 6" stroke="#ea4335"/>
<path d="M19.8 6 Q22.2 9.6 22.6 12.8 Q25 14.4 24.2 17.2 Q23.2 19.6 20.6 19.6 H13" stroke="#4285f4"/>
<path d="M13 19.6 H6.6" stroke="#34a853"/>
<path d="M6.6 19.6 Q2 19.6 2 14.4 Q2 9.4 7.6 9.2 Q9.6 9.4 10.8 10.6" stroke="#fbbc05"/>
</g></g></svg>
<svg class="b" style="left:2378.9px;top:1160.8px;" width="30" height="8" viewBox="0 0 30 8"><circle cx="4" cy="4" r="3.4" fill="#0a27a8"/><circle cx="13.5" cy="4" r="3.4" fill="#0a27a8"/><circle cx="22.6" cy="4" r="3.4" fill="#0a27a8"/></svg>
<svg class="b" style="left:2274.0px;top:1259.8px;" width="68.4" height="68.4" viewBox="0 0 68.4 68.4"><circle cx="34.2" cy="34.2" r="27.800000000000004" fill="#fff"/><path d="M33.47 61.99 A27.800000000000004 27.800000000000004 0 0 1 33.47 6.41" fill="none" stroke="#d3dcf8" stroke-width="8.8"/><path d="M34.93 6.41 A27.800000000000004 27.800000000000004 0 0 1 62.00 34.20" fill="none" stroke="#0728c5" stroke-width="8.8"/><path d="M62.00 34.20 A27.800000000000004 27.800000000000004 0 0 1 34.93 61.99" fill="none" stroke="#5070f5" stroke-width="8.8"/><g transform="translate(22.6,22.4)"><path d="M7.4 0 H13.4 L5.6 22.4 H0z" fill="#114a8b"/>
<path d="M8.2 0 H14.6 L23.4 22.4 H14.8 L9.4 17 L12 12.2z" fill="#35b8ee"/>
<path d="M10.6 16.4 L15.4 22.4 H4.8z" fill="#0078d4"/></g></svg>
<svg class="b" style="left:2378.9px;top:1290.0px;" width="30" height="8" viewBox="0 0 30 8"><circle cx="4" cy="4" r="3.4" fill="#0a27a8"/><circle cx="13.5" cy="4" r="3.4" fill="#0a27a8"/><circle cx="22.6" cy="4" r="3.4" fill="#0a27a8"/></svg>
<div class="b" style="left:2392.0px;top:1547.0px;width:108.0px;height:109.0px;background:#fff;border-top:2px solid #e4e4e7;"></div>
<div class="b" style="left:2392.0px;top:1548.8px;width:78.0px;height:77.8px;background:#0628b5;border-radius:50%;box-shadow:0 2px 14px rgba(20,30,80,0.18);border:1.5px solid #fff;"></div>
<svg class="b" style="left:2417.9px;top:1576.0px;" width="27" height="27" viewBox="0 0 27 27"><path d="M2.6 0 H23.8 Q26.4 0 26.4 2.6 V19.4 Q26.4 22 23.8 22 H20 L16.4 26.6 L15.4 22 H2.6 Q0 22 0 19.4 V2.6 Q0 0 2.6 0z" fill="#fff"/>
<text x="13.2" y="17.2" text-anchor="middle" font-family="Liberation Sans" font-size="16" font-weight="700" fill="#1b2a6b">?</text></svg>
<div class="b" style="left:13.8px;top:1063.4px;width:294.6px;height:283.2px;border:2px solid #d3ece7;border-radius:18px;background:radial-gradient(ellipse 110% 80% at 100% 95%, #9aaef6 0%, #b3c2f8 22%, #d6dffb 44%, #eef3fc 66%, #f7fcfb 100%);"></div>
<svg class="b" style="left:174.0px;top:1289.0px;" width="32" height="32" viewBox="0 0 32 32"><path d="M16 0 Q17.92 14.08 32 16 Q17.92 17.92 16 32 Q14.08 17.92 0 16 Q14.08 14.08 16 0z" fill="#f3f5fd" opacity="0.95"/></svg>
<svg class="b" style="left:270.8px;top:1191.0px;" width="16" height="16" viewBox="0 0 16 16"><path d="M8 0 Q8.96 7.04 16 8 Q8.96 8.96 8 16 Q7.04 8.96 0 8 Q7.04 7.04 8 0z" fill="#f0f3fd" opacity="0.85"/></svg>
<svg class="b" style="left:132.5px;top:1278.0px;" width="14" height="14" viewBox="0 0 14 14"><path d="M7 0 Q7.840000000000001 6.16 14 7 Q7.840000000000001 7.840000000000001 7 14 Q6.16 7.840000000000001 0 7 Q6.16 6.16 7 0z" fill="#e8ecf8" opacity="0.6"/></svg>
<div class="t" style="left:26.4px;top:1082.1px;font-size:25.6px;font-weight:700;color:#0c1326;">GregAI</div>
<div class="b" style="left:127.0px;top:1076.3px;width:94.8px;height:37.4px;background:#d2f1ec;border-radius:7px;"></div>
<svg class="b" style="left:134.8px;top:1082.0px;" width="22" height="26" viewBox="0 0 22 26"><path d="M6.6 1.6 H15.2 M8.4 1.8 V8.6 L2.4 19.2 Q1 23.6 5.4 23.6 H16.4 Q20.8 23.6 19.4 19.2 L13.4 8.6 V1.8" fill="none" stroke="#0d6464" stroke-width="2.6" stroke-linejoin="round" stroke-linecap="round"/>
<path d="M4.8 16 H17 L19 20.4 Q19.4 22.6 16.8 22.6 H5 Q2.4 22.6 2.8 20.4z" fill="#0d6464"/></svg>
<div class="t" style="left:173.5px;top:1085.5px;font-size:21px;font-weight:400;color:#0d6464;">Beta</div>
<div class="t" style="left:26.5px;top:1124.7px;font-size:19.8px;font-weight:400;color:#1d2433;">Greg is an AI assistant who</div>
<div class="t" style="left:26.5px;top:1163.6px;font-size:19.8px;font-weight:400;color:#1d2433;">can help with many things.</div>
<div class="t" style="left:26.5px;top:1202.4px;font-size:19.8px;font-weight:400;color:#1d2433;">For example, ask Greg to</div>
<div class="t" style="left:26.5px;top:1241.3px;font-size:19.8px;font-weight:400;color:#1d2433;">validate one of your issues.</div>
<div class="b" style="left:26.7px;top:1296.7px;width:52.3px;height:38.0px;background:#dde3fb;border-radius:9px;"></div>
<div class="t" style="left:34.5px;top:1305.9px;font-size:19px;font-weight:400;color:#1a3bd0;">&#8984; K</div>
<svg class="b" style="left:226.9px;top:1270.0px;" width="70.0" height="65.0" viewBox="0 0 70.0 65.0"><g fill="#fbc400" style="filter:drop-shadow(0 0 4px #5b86f7)"><rect x="15.0" y="0.0" width="5.3" height="5.3"/><rect x="20.0" y="0.0" width="5.3" height="5.3"/><rect x="45.0" y="0.0" width="5.3" height="5.3"/><rect x="50.0" y="0.0" width="5.3" height="5.3"/><rect x="10.0" y="5.0" width="5.3" height="5.3"/><rect x="55.0" y="5.0" width="5.3" height="5.3"/><rect x="5.0" y="10.0" width="5.3" height="5.3"/><rect x="10.0" y="10.0" width="5.3" height="5.3"/><rect x="20.0" y="10.0" width="5.3" height="5.3"/><rect x="25.0" y="10.0" width="5.3" height="5.3"/><rect x="30.0" y="10.0" width="5.3" height="5.3"/><rect x="35.0" y="10.0" width="5.3" height="5.3"/><rect x="40.0" y="10.0" width="5.3" height="5.3"/><rect x="45.0" y="10.0" width="5.3" height="5.3"/><rect x="55.0" y="10.0" width="5.3" height="5.3"/><rect x="60.0" y="10.0" width="5.3" height="5.3"/><rect x="5.0" y="15.0" width="5.3" height="5.3"/><rect x="10.0" y="15.0" width="5.3" height="5.3"/><rect x="15.0" y="15.0" width="5.3" height="5.3"/><rect x="20.0" y="15.0" width="5.3" height="5.3"/><rect x="25.0" y="15.0" width="5.3" height="5.3"/><rect x="30.0" y="15.0" width="5.3" height="5.3"/><rect x="35.0" y="15.0" width="5.3" height="5.3"/><rect x="40.0" y="15.0" width="5.3" height="5.3"/><rect x="45.0" y="15.0" width="5.3" height="5.3"/><rect x="50.0" y="15.0" width="5.3" height="5.3"/><rect x="55.0" y="15.0" width="5.3" height="5.3"/><rect x="60.0" y="15.0" width="5.3" height="5.3"/><rect x="5.0" y="20.0" width="5.3" height="5.3"/><rect x="10.0" y="20.0" width="5.3" height="5.3"/><rect x="15.0" y="20.0" width="5.3" height="5.3"/><rect x="20.0" y="20.0" width="5.3" height="5.3"/><rect x="25.0" y="20.0" width="5.3" height="5.3"/><rect x="30.0" y="20.0" width="5.3" height="5.3"/><rect x="35.0" y="20.0" width="5.3" height="5.3"/><rect x="40.0" y="20.0" width="5.3" height="5.3"/><rect x="45.0" y="20.0" width="5.3" height="5.3"/><rect x="50.0" y="20.0" width="5.3" height="5.3"/><rect x="55.0" y="20.0" width="5.3" height="5.3"/><rect x="60.0" y="20.0" width="5.3" height="5.3"/><rect x="10.0" y="25.0" width="5.3" height="5.3"/><rect x="15.0" y="25.0" width="5.3" height="5.3"/><rect x="20.0" y="25.0" width="5.3" height="5.3"/><rect x="25.0" y="25.0" width="5.3" height="5.3"/><rect x="30.0" y="25.0" width="5.3" height="5.3"/><rect x="35.0" y="25.0" width="5.3" height="5.3"/><rect x="40.0" y="25.0" width="5.3" height="5.3"/><rect x="45.0" y="25.0" width="5.3" height="5.3"/><rect x="50.0" y="25.0" width="5.3" height="5.3"/><rect x="55.0" y="25.0" width="5.3" height="5.3"/><rect x="10.0" y="30.0" width="5.3" height="5.3"/><rect x="15.0" y="30.0" width="5.3" height="5.3"/><rect x="20.0" y="30.0" width="5.3" height="5.3"/><rect x="25.0" y="30.0" width="5.3" height="5.3"/><rect x="30.0" y="30.0" width="5.3" height="5.3"/><rect x="35.0" y="30.0" width="5.3" height="5.3"/><rect x="40.0" y="30.0" width="5.3" height="5.3"/><rect x="45.0" y="30.0" width="5.3" height="5.3"/><rect x="50.0" y="30.0" width="5.3" height="5.3"/><rect x="55.0" y="30.0" width="5.3" height="5.3"/><rect x="10.0" y="35.0" width="5.3" height="5.3"/><rect x="15.0" y="35.0" width="5.3" height="5.3"/><rect x="20.0" y="35.0" width="5.3" height="5.3"/><rect x="25.0" y="35.0" width="5.3" height="5.3"/><rect x="30.0" y="35.0" width="5.3" height="5.3"/><rect x="35.0" y="35.0" width="5.3" height="5.3"/><rect x="40.0" y="35.0" width="5.3" height="5.3"/><rect x="45.0" y="35.0" width="5.3" height="5.3"/><rect x="50.0" y="35.0" width="5.3" height="5.3"/><rect x="55.0" y="35.0" width="5.3" height="5.3"/><rect x="10.0" y="40.0" width="5.3" height="5.3"/><rect x="15.0" y="40.0" width="5.3" height="5.3"/><rect x="20.0" y="40.0" width="5.3" height="5.3"/><rect x="25.0" y="40.0" width="5.3" height="5.3"/><rect x="30.0" y="40.0" width="5.3" height="5.3"/><rect x="35.0" y="40.0" width="5.3" height="5.3"/><rect x="40.0" y="40.0" width="5.3" height="5.3"/><rect x="45.0" y="40.0" width="5.3" height="5.3"/><rect x="50.0" y="40.0" width="5.3" height="5.3"/><rect x="55.0" y="40.0" width="5.3" height="5.3"/><rect x="5.0" y="45.0" width="5.3" height="5.3"/><rect x="10.0" y="45.0" width="5.3" height="5.3"/><rect x="15.0" y="45.0" width="5.3" height="5.3"/><rect x="20.0" y="45.0" width="5.3" height="5.3"/><rect x="45.0" y="45.0" width="5.3" height="5.3"/><rect x="50.0" y="45.0" width="5.3" height="5.3"/><rect x="55.0" y="45.0" width="5.3" height="5.3"/><rect x="60.0" y="45.0" width="5.3" height="5.3"/><rect x="5.0" y="50.0" width="5.3" height="5.3"/><rect x="10.0" y="50.0" width="5.3" height="5.3"/><rect x="15.0" y="50.0" width="5.3" height="5.3"/><rect x="25.0" y="50.0" width="5.3" height="5.3"/><rect x="40.0" y="50.0" width="5.3" height="5.3"/><rect x="50.0" y="50.0" width="5.3" height="5.3"/><rect x="55.0" y="50.0" width="5.3" height="5.3"/><rect x="60.0" y="50.0" width="5.3" height="5.3"/><rect x="0.0" y="55.0" width="5.3" height="5.3"/><rect x="15.0" y="55.0" width="5.3" height="5.3"/><rect x="50.0" y="55.0" width="5.3" height="5.3"/><rect x="65.0" y="55.0" width="5.3" height="5.3"/><rect x="5.0" y="60.0" width="5.3" height="5.3"/><rect x="60.0" y="60.0" width="5.3" height="5.3"/></g><g fill="#fff"><rect x="25.0" y="19.0" width="5.0" height="5.0"/><rect x="20.0" y="24.0" width="10.0" height="10.0"/><rect x="40.0" y="19.0" width="5.0" height="5.0"/><rect x="40.0" y="24.0" width="10.0" height="10.0"/></g><g fill="#0a0a14"><rect x="25.0" y="24.5" width="5.0" height="5.0"/><rect x="40.0" y="24.5" width="5.0" height="5.0"/></g></svg>
<div class="b" style="left:1472.0px;top:283.2px;width:414.6px;height:141.9px;background:#0a1027;border-radius:8px;box-shadow:0 4px 14px rgba(10,16,39,0.18);"></div>
<svg class="b" style="left:1671.0px;top:276.0px;" width="16" height="8" viewBox="0 0 16 8"><path d="M0 8 L8 0 L16 8z" fill="#0a1027"/></svg>
<div class="t" style="left:1485.5px;top:303.9px;font-size:23.3px;font-weight:400;color:#fff;">32 logins detected across your</div>
<div class="t" style="left:1485.5px;top:342.6px;font-size:23.3px;font-weight:400;color:#fff;">targets. You&#8217;ve added 8 and</div>
<div class="t" style="left:1485.5px;top:381.3px;font-size:23.3px;font-weight:400;color:#fff;">excluded 8.</div>
<div class="b" style="left:597.1px;top:719.6px;width:414.5px;height:181.0px;background:#0a1027;border-radius:8px;box-shadow:0 4px 14px rgba(10,16,39,0.18);"></div>
<svg class="b" style="left:796.3px;top:900.0px;" width="16" height="7" viewBox="0 0 16 7"><path d="M0 0 L8 7 L16 0z" fill="#0a1027"/></svg>
<div class="t" style="left:610.4px;top:740.3px;font-size:22.4px;font-weight:700;color:#fff;">Cloud sync enabled</div>
<div class="t" style="left:610.4px;top:778.3px;font-size:23.2px;font-weight:400;color:#fff;">Cloud sync adds new external IP</div>
<div class="t" style="left:610.4px;top:817.3px;font-size:23.2px;font-weight:400;color:#fff;">addresses or hostnames in cloud</div>
<div class="t" style="left:610.4px;top:856.3px;font-size:23.2px;font-weight:400;color:#fff;">accounts as Intruder targets.</div>
<div class="b" style="left:1961.4px;top:928.2px;width:192.1px;height:219.3px;background:#0a1027;border-radius:8px;box-shadow:0 4px 14px rgba(10,16,39,0.18);"></div>
<svg class="b" style="left:2152.0px;top:1030.0px;" width="8.5" height="16" viewBox="0 0 8.5 16"><path d="M0 0 L8.5 8 L0 16z" fill="#0a1027"/></svg>
<div class="t" style="left:1974.4px;top:949.0px;font-size:22.4px;font-weight:700;color:#fff;">Asset overview</div>
<div class="t" style="left:1974.4px;top:988.0px;font-size:23.3px;font-weight:400;color:#fff;">641 Assets total</div>
<div class="t" style="left:1974.4px;top:1026.5px;font-size:23.3px;font-weight:400;color:#fff;">161 Targets</div>
<div class="t" style="left:1974.4px;top:1065.0px;font-size:23.3px;font-weight:400;color:#fff;">160 Excluded</div>
<div class="t" style="left:1974.4px;top:1103.5px;font-size:23.3px;font-weight:400;color:#fff;">321 Unresolved</div>
<svg class="b" style="left:1654.8px;top:200.3px;" width="26" height="26" viewBox="0 0 26 26"><path d="M7.2 13.2 L6.4 3 Q6.6 0.4 8.6 0.4 Q10.6 0.6 10.9 2.8 L11.4 7 Q13 5.6 14.4 7.2 Q16.2 6.2 17.4 8 Q19.4 6.6 21 8.4 Q23.6 7.8 24.6 10 Q25.4 13 25 16 L22.4 22.8 Q21.6 25.4 19.6 25.4 L11.6 25 Q10.2 24.8 9.4 23.6 L1.4 14.4 Q0 12.6 1.6 11.6 Q3.6 10.6 5.4 12.2z" fill="#fff" stroke="#111" stroke-width="1.7" stroke-linejoin="round"/>
<path d="M13.4 15.6 V21 M15.6 15.6 V21 M17.8 15.6 V21" stroke="#9a9a9a" stroke-width="1.2"/></svg>
<svg class="b" style="left:756.0px;top:945.0px;" width="26" height="26" viewBox="0 0 26 26"><path d="M7.2 13.2 L6.4 3 Q6.6 0.4 8.6 0.4 Q10.6 0.6 10.9 2.8 L11.4 7 Q13 5.6 14.4 7.2 Q16.2 6.2 17.4 8 Q19.4 6.6 21 8.4 Q23.6 7.8 24.6 10 Q25.4 13 25 16 L22.4 22.8 Q21.6 25.4 19.6 25.4 L11.6 25 Q10.2 24.8 9.4 23.6 L1.4 14.4 Q0 12.6 1.6 11.6 Q3.6 10.6 5.4 12.2z" fill="#fff" stroke="#111" stroke-width="1.7" stroke-linejoin="round"/>
<path d="M13.4 15.6 V21 M15.6 15.6 V21 M17.8 15.6 V21" stroke="#9a9a9a" stroke-width="1.2"/></svg>
<svg class="b" style="left:2246.0px;top:1022.0px;" width="26" height="26" viewBox="0 0 26 26"><path d="M7.2 13.2 L6.4 3 Q6.6 0.4 8.6 0.4 Q10.6 0.6 10.9 2.8 L11.4 7 Q13 5.6 14.4 7.2 Q16.2 6.2 17.4 8 Q19.4 6.6 21 8.4 Q23.6 7.8 24.6 10 Q25.4 13 25 16 L22.4 22.8 Q21.6 25.4 19.6 25.4 L11.6 25 Q10.2 24.8 9.4 23.6 L1.4 14.4 Q0 12.6 1.6 11.6 Q3.6 10.6 5.4 12.2z" fill="#fff" stroke="#111" stroke-width="1.7" stroke-linejoin="round"/>
<path d="M13.4 15.6 V21 M15.6 15.6 V21 M17.8 15.6 V21" stroke="#9a9a9a" stroke-width="1.2"/></svg>
</body></html>
